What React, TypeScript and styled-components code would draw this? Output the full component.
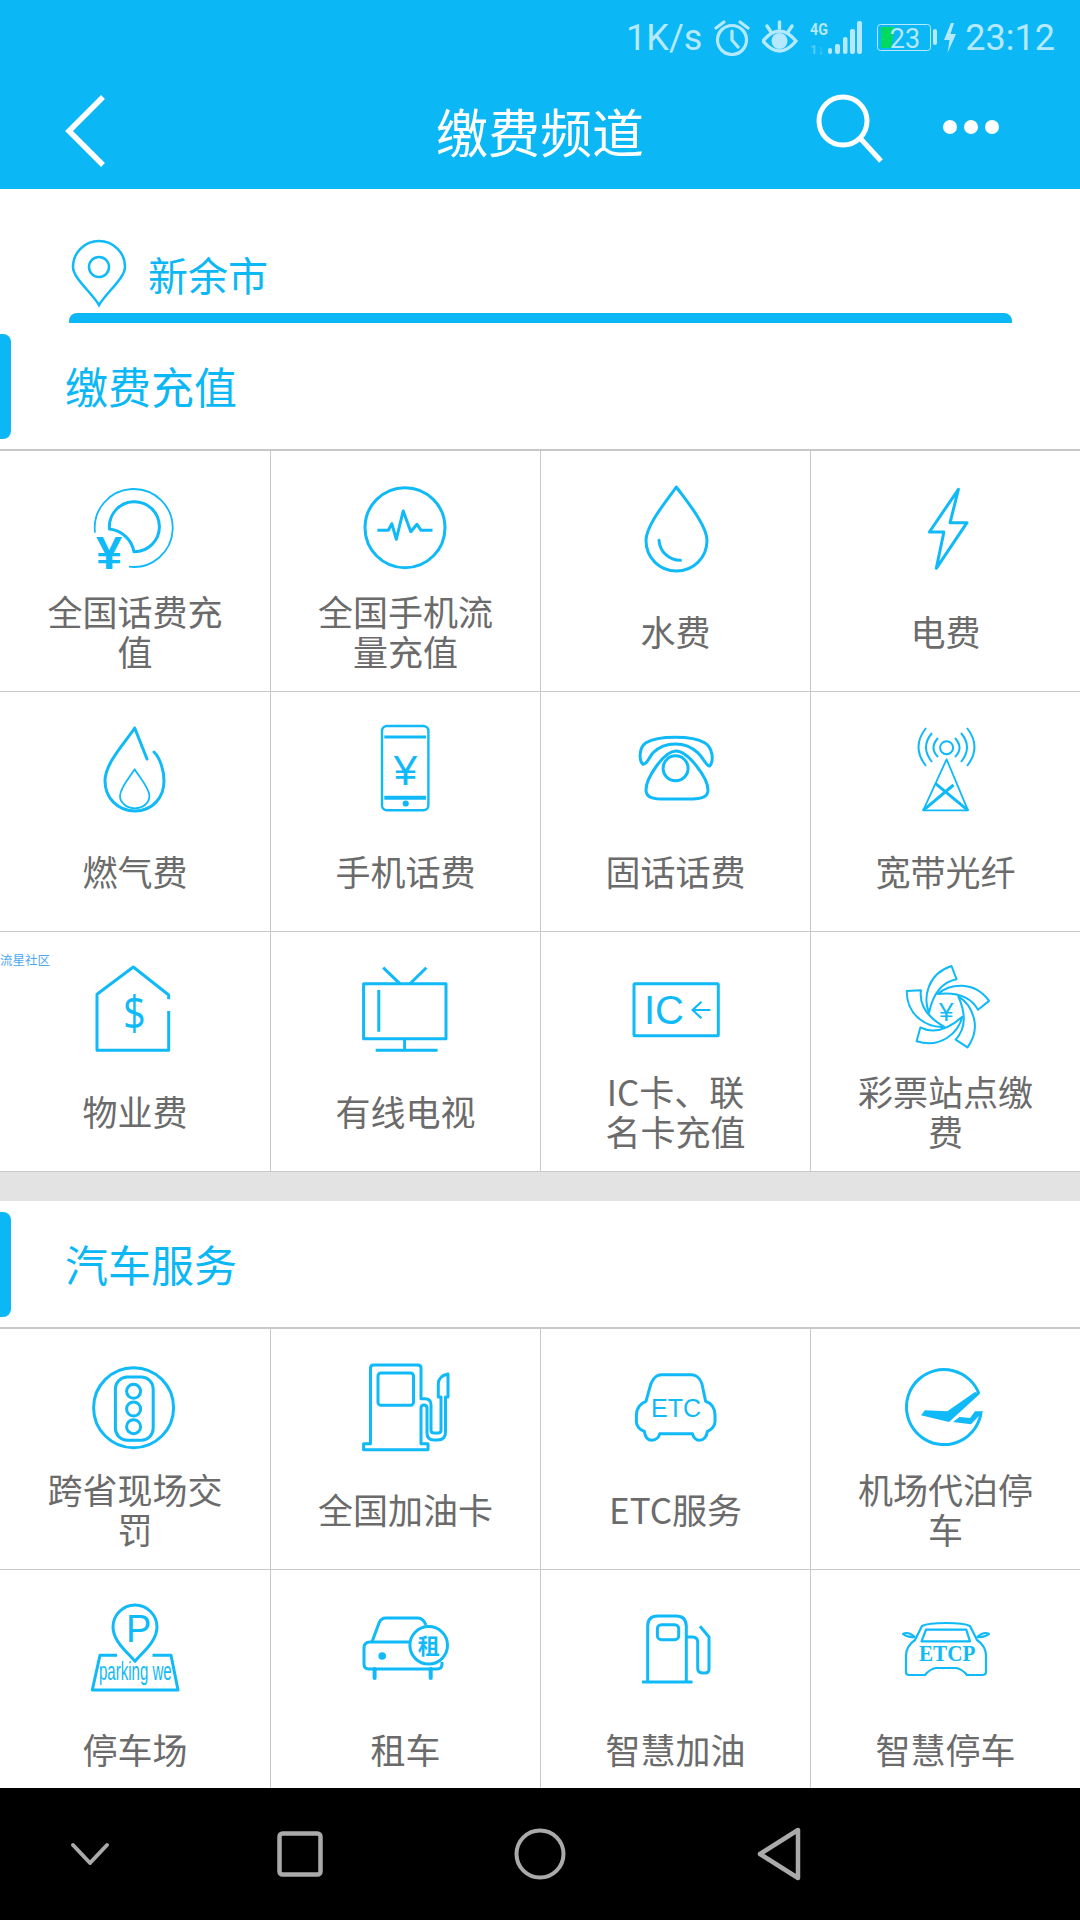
import React from 'react';
import styled, { createGlobalStyle } from 'styled-components';

const BLUE = '#0bb7f5';
const ICON = '#10b9f7';
const CJK = '"Noto Sans CJK SC", "Noto Sans", sans-serif';

const GlobalStyle = createGlobalStyle`
    html, body {
        margin: 0;
        padding: 0;
        background: #fff;
        font-family: ${CJK};
    }
    * {
        box-sizing: border-box;
    }
`;

const Page = styled.div`
    width: 1080px;
    height: 1920px;
    display: flex;
    flex-direction: column;
    overflow: hidden;
    background: #fff;
`;

const Header = styled.header`
    height: 189px;
    flex: none;
    background: ${BLUE};
    color: #fff;
`;

const StatusBar = styled.div`
    height: 72px;
    display: flex;
    align-items: center;
    justify-content: flex-end;
    gap: 12px;
    padding: 4px 25px 0 0;
    color: #b4e9ff;
    font-family: Roboto, sans-serif;
    font-size: 36px;
`;

const Clock = styled.span`
    margin-left: -3px;
`;

const TitleRow = styled.div`
    height: 117px;
    display: grid;
    grid-template-columns: 1fr auto 1fr;
    align-items: center;
`;

const BackSlot = styled.div`
    display: flex;
    padding-left: 59px;
`;

const Title = styled.h1`
    margin: 0;
    font-size: 52px;
    font-weight: 400;
    line-height: 70px;
`;

const Actions = styled.div`
    display: flex;
    align-items: center;
    justify-content: flex-end;
    gap: 58px;
    padding-right: 80px;
    margin-top: -3px;
`;

const Content = styled.main`
    flex: 1;
    min-height: 0;
    overflow: hidden;
`;

const LocationRow = styled.div`
    height: 124px;
    display: flex;
    align-items: flex-end;
    gap: 20px;
    padding: 0 0 5px 70px;
`;

const LocationName = styled.span`
    color: ${BLUE};
    font-size: 40px;
    line-height: 58px;
    margin-bottom: 5px;
`;

const LocationBar = styled.div`
    height: 10px;
    margin: 0 68px 0 69px;
    background: ${BLUE};
    border-radius: 8px 8px 0 0;
`;

const SectionHead = styled.div`
    height: 128px;
    display: flex;
    align-items: center;
    gap: 54px;
    border-bottom: 2px solid #c8c8c8;
`;

const SectionTitle = styled.h2`
    margin: 0 0 3px;
    color: ${BLUE};
    font-size: 43px;
    font-weight: 400;
`;

const Accent = styled.span`
    width: 11px;
    height: 105px;
    background: ${BLUE};
    border-radius: 0 8px 8px 0;
`;

const Grid = styled.div`
    display: grid;
    grid-template-columns: repeat(4, 270px);
`;

const Cell = styled.div`
    position: relative;
    height: 240px;
    padding-top: 26px;
    display: flex;
    flex-direction: column;
    align-items: center;
    border-bottom: 1px solid #c8c8c8;
    &:not(:nth-child(4n + 1)) {
        border-left: 1px solid #c8c8c8;
    }
    &:nth-child(-n + 4) {
        height: 241px;
        padding-top: 27px;
    }
`;

const Label = styled.div`
    width: 180px;
    height: 100px;
    margin-top: 3px;
    display: flex;
    align-items: center;
    justify-content: center;
    text-align: center;
    white-space: pre-line;
    color: #6b6b6b;
    font-size: 35px;
    line-height: 40px;
`;

const Watermark = styled.span`
    position: absolute;
    left: 0;
    top: 20px;
    color: #4aa8f2;
    font-size: 12.5px;
    line-height: 16px;
`;

const Divider = styled.div`
    height: 29px;
    background: #e3e3e3;
`;

const NavBar = styled.nav`
    height: 132px;
    flex: none;
    display: grid;
    grid-template-columns: 180px 240px 240px 240px;
    align-items: center;
    justify-items: center;
    background: #000;
`;

const IconSvg = styled.svg`
    width: 100px;
    height: 100px;
    flex: none;
    fill: none;
    stroke: ${ICON};
    stroke-width: 3;
    stroke-linejoin: round;
    text {
        fill: ${ICON};
        stroke: none;
    }
`;

const Icon = ({ children }: { children: React.ReactNode }) => (
    <IconSvg viewBox="0 0 100 100">{children}</IconSvg>
);

const CJK_ICON = '"Noto Sans CJK SC", sans-serif';
const SANS = '"Liberation Sans", sans-serif';

const blade = 'M55.5 8 L60.6 21.3 C46 24 37 36 33 54.7 C27 40 31 16 55.5 8Z';

const icons = {
    phoneBill: (
        <Icon>
            <path strokeWidth="1.8" d="M10 54.7 A39 39 0 1 1 44 88.7" />
            <path d="M24.5 51 A25 25 0 1 1 49 73.7 A28 28 0 0 0 24.5 51Z" />
            <text x="24" y="91" fontFamily={SANS} fontSize="47" fontWeight="700" textAnchor="middle">¥</text>
        </Icon>
    ),
    traffic: (
        <Icon>
            <circle cx="49" cy="49.7" r="40" />
            <path d="M21.4 52.3 H32.4 L35.8 45.7 L40.3 61.3 L47.2 33 L54.8 53.7 L61 46.3 L65.1 52.3 H76.5" />
        </Icon>
    ),
    water: (
        <Icon>
            <path d="M50.3 9 C42 21 20 47 20 62.5 C20 80 34 93 50.3 93 C67 93 81 80 81 62.5 C81 47 59 21 50.3 9Z" />
            <path strokeLinecap="round" d="M33 62.3 C34 74 43 82.3 54.5 82.3" />
        </Icon>
    ),
    power: (
        <Icon>
            <path d="M62.4 11.3 L33.4 54 H47.9 L40.3 90.3 L71 44.7 H54.1Z" />
        </Icon>
    ),
    gas: (
        <Icon>
            <path strokeLinecap="round" d="M62 41 L49.7 10 C40 25 20 45 20 63 C20 80 33 93 50 93 C67 93 79 80 79 63 C79 52 75 40 69 34" />
            <path strokeWidth="1.8" d="M49.7 51.3 C44 60 35 70 35 78 C35 85 42 90.3 49.7 90.3 C58 90.3 64.4 85 64.4 78 C64.4 70 55 60 49.7 51.3Z" />
        </Icon>
    ),
    mobile: (
        <Icon>
            <rect x="26" y="8" width="46.4" height="84.3" rx="5" strokeWidth="2.4" />
            <path d="M28.3 19 H70" />
            <path strokeWidth="4" d="M28.3 79.7 H70" />
            <circle cx="49.7" cy="85.5" r="1.6" />
            <text x="49.5" y="66.5" fontFamily={SANS} fontSize="42" textAnchor="middle">¥</text>
        </Icon>
    ),
    landline: (
        <Icon>
            <path d="M17 46.3 C13 43 12.5 29.7 20 24.7 C32 17.3 66.5 17.3 78.6 24.7 C87 29.7 88 43 83.7 48 C80 48 78.6 41.3 71.7 34.7 C59.6 23 39 23 27 34.7 C21.8 41.3 21 46.3 17 46.3Z" />
            <path d="M50 33 C38 33 20 60 20 72 C20 80 28 81 35 81 H66 C74 81 82 80 82 72 C82 60 62 33 50 33Z" />
            <circle cx="49.6" cy="50.3" r="12.5" />
        </Icon>
    ),
    broadband: (
        <Icon>
            <circle cx="50.6" cy="29.7" r="6.5" strokeWidth="2" />
            <path strokeWidth="2" d="M42 20 Q33 30 42 39 M59 20 Q68 30 59 39 M36 15 Q24 29 36 44 M65 15 Q77 29 65 44 M30 10 Q15 29 30 48 M71 10 Q86 29 71 48" />
            <path strokeWidth="1.8" d="M50.6 41.3 L27.2 92.3 H72 Z" />
            <path d="M39.3 65.3 L72 92.3 M57.5 67 L27.2 92.3" />
        </Icon>
    ),
    property: (
        <Icon>
            <path d="M83.7 41.3 V37 L48.3 9 L12 36.3 V92.3 H83.7 V53" />
            <text transform="translate(38 72) scale(0.85 1)" fontFamily='"Open Sans", sans-serif' fontSize="47">$</text>
        </Icon>
    ),
    tv: (
        <Icon>
            <rect x="7.6" y="25.7" width="82.4" height="55" />
            <path d="M27.2 9.7 L43.8 25.7 M70.3 9.7 L54 25.7 M22.8 32 V73.7 M48.6 80.7 V92.3 M19.7 92.3 H81.6" />
        </Icon>
    ),
    icCard: (
        <Icon>
            <rect x="8" y="25.7" width="84.3" height="52" rx="1" />
            <text x="18" y="66.3" fontFamily={SANS} fontSize="40">IC</text>
            <path strokeWidth="2.2" d="M84.4 52 H66.5 M75.5 43.7 L66.5 52 L75.5 60.3" />
        </Icon>
    ),
    lottery: (
        <Icon>
            {[0, 72, 144, 216, 288].map((deg) => (
                <path key={deg} strokeWidth="2" d={blade} transform={`rotate(${deg} 50.3 51.3)`} />
            ))}
            <text x="50.3" y="63" fontFamily={SANS} fontSize="26" textAnchor="middle">¥</text>
        </Icon>
    ),
    fines: (
        <Icon>
            <circle cx="48.6" cy="51.7" r="40" />
            <rect x="30.4" y="21" width="37.8" height="63.3" rx="12" />
            <circle cx="48.6" cy="35.3" r="7" />
            <circle cx="48.6" cy="53" r="7" />
            <circle cx="48.6" cy="70.7" r="7" />
        </Icon>
    ),
    fuelCard: (
        <Icon>
            <path d="M14.5 87.7 V12 q0-3 3-3 H62 q3 0 3 3 V42.7 H69 q6 0 6 6 V74 q0 3 3 3 h4 q3 0 3-3 V41 H82.3 V28 q0-8 9.7-10 V41 H89.5 V76 q0 8-8 8 H78 q-7 0-7-7 V52 q0-3-3-3 q-3 0-3 3 V87.7 H72 V93.7 H7.6 V87.7Z" />
            <rect x="22" y="17" width="35.5" height="32.3" rx="3" />
        </Icon>
    ),
    etc: (
        <Icon>
            <path d="M35.5 18.7 H65 C72 18.7 76 25 77 32.7 L79.6 45.3 C85 47 89 52 89 59.3 V66 C89 70 85 74 81.3 75.3 C81 81 77 84.3 73.4 84.3 C70 84.3 67 81 66.5 77.7 H33.8 C33 81 30 84.3 26 84.3 C22 84.3 19 81 18.3 75.3 C14 74 10.4 70 10.4 66 V59.3 C10.4 52 15 47 20 45.3 L23.5 32.7 C25 25 29 18.7 35.5 18.7Z" />
            <text x="50" y="61" fontFamily={SANS} fontSize="25" textAnchor="middle">ETC</text>
        </Icon>
    ),
    airport: (
        <Icon>
            <path d="M83 37.7 A37.5 37.5 0 1 0 85 57" />
            <path fill={ICON} stroke="none" d="M84 37.7 L79 36 L51.3 55.3 L29 54.3 L25 59.3 L53 66Z" />
            <path fill={ICON} stroke="none" d="M87.5 55.3 H79 L74 62 L63.5 61 L57 66 L75 68.3Z" />
        </Icon>
    ),
    parking: (
        <Icon>
            <path d="M50 65.3 C42 56 28 45 28 31 a22 22 0 0 1 44 0 C72 45 58 56 50 65.3Z" />
            <text x="41" y="46" fontFamily={SANS} fontSize="38">P</text>
            <path d="M32 59.3 H15 L7.3 94 H93 L86 59.3 H67.5" />
            <text transform="translate(14 84) scale(0.94 1.65)" fontFamily={SANS} fontSize="16">parking we</text>
        </Icon>
    ),
    rental: (
        <Icon>
            <path d="M16 46 L23 27 q2-5 7-5 H62 q5 0 8 7" />
            <path d="M54 46 H14 q-6 0-6 6 V68 q0 5 5 5 H81 q5 0 5-5 V66" />
            <circle cx="72.7" cy="49.3" r="18.8" />
            <circle cx="26.2" cy="60" r="3.8" fill={ICON} stroke="none" />
            <path strokeWidth="4" strokeLinecap="round" d="M18.6 73 V82 M74.7 73 V82" />
            <text x="72.7" y="57.5" fontFamily={CJK_ICON} fontSize="22" fontWeight="700" textAnchor="middle">租</text>
        </Icon>
    ),
    smartFuel: (
        <Icon>
            <path d="M21.7 86 V30 q0-10 10-10 H50 q10 0 10.3 10 V86 M16 86 H66.5" />
            <rect x="31.4" y="28.7" width="21.3" height="15" rx="4" />
            <path d="M60.3 41 H66.5 q5.2 0 5.2 5 V72 q0 5 5 5 H79 q4 0 4-4 V41 L74 30.3" />
        </Icon>
    ),
    etcp: (
        <Icon>
            <path strokeWidth="2.2" d="M26 30 Q32 27 50 27 Q68 27 74 30 L81 44 Q90 50 90 60 V76 Q90 79 86 79 H71 Q66 73 60 72 H40 Q34 73 29 79 H13 Q10 79 10 76 V60 Q10 50 19 44Z" />
            <path strokeWidth="2.2" d="M30 33.7 H70.3 L74 45.3 H25.5Z" />
            <path strokeWidth="2.2" d="M19 41 Q12 35 7 38 Q12 42 19 41 M81 41 Q88 35 93 38 Q88 42 81 41" />
            <text transform="translate(23 65) scale(0.88 1)" fontFamily='"Liberation Serif", serif' fontSize="24" fontWeight="700">ETCP</text>
        </Icon>
    ),
};

type Item = { label: string; icon: React.ReactNode; mark?: string };

const billItems: Item[] = [
    { label: '全国话费充值', icon: icons.phoneBill },
    { label: '全国手机流量充值', icon: icons.traffic },
    { label: '水费', icon: icons.water },
    { label: '电费', icon: icons.power },
    { label: '燃气费', icon: icons.gas },
    { label: '手机话费', icon: icons.mobile },
    { label: '固话话费', icon: icons.landline },
    { label: '宽带光纤', icon: icons.broadband },
    { label: '物业费', icon: icons.property, mark: '流星社区' },
    { label: '有线电视', icon: icons.tv },
    { label: 'IC卡、联\n名卡充值', icon: icons.icCard },
    { label: '彩票站点缴费', icon: icons.lottery },
];

const carItems: Item[] = [
    { label: '跨省现场交罚', icon: icons.fines },
    { label: '全国加油卡', icon: icons.fuelCard },
    { label: 'ETC服务', icon: icons.etc },
    { label: '机场代泊停车', icon: icons.airport },
    { label: '停车场', icon: icons.parking },
    { label: '租车', icon: icons.rental },
    { label: '智慧加油', icon: icons.smartFuel },
    { label: '智慧停车', icon: icons.etcp },
];

const Section = ({ title, items }: { title: string; items: Item[] }) => (
    <section>
        <SectionHead>
            <Accent />
            <SectionTitle>{title}</SectionTitle>
        </SectionHead>
        <Grid>
            {items.map((item) => (
                <Cell key={item.label}>
                    {item.mark && <Watermark>{item.mark}</Watermark>}
                    {item.icon}
                    <Label>{item.label}</Label>
                </Cell>
            ))}
        </Grid>
    </section>
);

const STATUS = '#b4e9ff';

const StatusIcons = () => (
    <>
        <svg width="36" height="36" viewBox="0 0 36 36" fill="none" stroke={STATUS} strokeWidth="3.2" strokeLinecap="round">
            <circle cx="18" cy="20" r="14.5" />
            <path d="M18 11 V20 L24 27 M2 8 L10 2 M34 8 L26 2" />
        </svg>
        <svg width="36" height="36" viewBox="0 0 36 36" fill="none" stroke={STATUS} strokeWidth="3.4" strokeLinecap="round">
            <path d="M1 21 Q17.5 1 34 21 Q17.5 41 1 21Z" />
            <circle cx="17.5" cy="21" r="8" fill={STATUS} stroke="none" />
            <path d="M17.5 2 V8 M5 6 L9 12 M30 6 L26 12" />
        </svg>
        <svg width="52" height="36" viewBox="0 0 52 36" fill={STATUS}>
            <text transform="translate(0 15) scale(0.95 1.15)" fontFamily="Roboto, sans-serif" fontSize="15" fontWeight="700">4G</text>
            <text x="0" y="34" fontFamily="Roboto, sans-serif" fontSize="13" fontWeight="700" opacity="0.45">1↓</text>
            <rect x="18" y="28" width="4" height="6" rx="2" />
            <rect x="25" y="24" width="5" height="10" rx="2" />
            <rect x="33" y="17" width="4.5" height="17" rx="2" />
            <rect x="40" y="9" width="5" height="25" rx="2" />
            <rect x="47" y="1" width="5" height="33" rx="2" />
        </svg>
        <svg width="82" height="36" viewBox="0 0 82 36" fill="none">
            <rect x="3.5" y="4.5" width="53" height="26" rx="3" stroke={STATUS} />
            <path d="M7 7 H21 L17 28 H7Z" fill="#00d95f" />
            <text x="31" y="27.5" fill={STATUS} fontFamily="Roboto, sans-serif" fontSize="27" textAnchor="middle">23</text>
            <rect x="59" y="9" width="4" height="16" rx="2" fill={STATUS} />
            <path d="M77 3 L70 20 H75.5 L73.5 33 L82 14 H76.5 L80 3Z" fill={STATUS} />
        </svg>
    </>
);

export default function App() {
    return (
        <Page>
            <GlobalStyle />
            <Header>
                <StatusBar>
                    <span>1K/s</span>
                    <StatusIcons />
                    <Clock>23:12</Clock>
                </StatusBar>
                <TitleRow>
                    <BackSlot>
                        <svg width="50" height="76" viewBox="0 0 50 76" fill="none" stroke="#fff" strokeWidth="5.5">
                            <path d="M44 4 L10 38 L44 72" />
                        </svg>
                    </BackSlot>
                    <Title>缴费频道</Title>
                    <Actions>
                        <svg width="68" height="70" viewBox="0 0 68 70" fill="none" stroke="#fff" strokeWidth="5">
                            <circle cx="27" cy="27" r="24" />
                            <path d="M44 44 L65 67" />
                        </svg>
                        <svg width="58" height="70" viewBox="0 0 58 70" fill="#fff">
                            <circle cx="8" cy="33" r="7" />
                            <circle cx="29" cy="33" r="7" />
                            <circle cx="50" cy="33" r="7" />
                        </svg>
                    </Actions>
                </TitleRow>
            </Header>
            <Content>
                <LocationRow>
                    <svg width="58" height="70" viewBox="0 0 58 70" fill="none" stroke={ICON} strokeWidth="2.5">
                        <path d="M29 67 C22 55 3 40 3 29 a26 26 0 0 1 52 0 C55 40 36 55 29 67Z" />
                        <circle cx="29" cy="29" r="10" />
                    </svg>
                    <LocationName>新余市</LocationName>
                </LocationRow>
                <LocationBar />
                <Section title="缴费充值" items={billItems} />
                <Divider />
                <Section title="汽车服务" items={carItems} />
            </Content>
            <NavBar>
                <svg width="40" height="24" viewBox="0 0 40 24" fill="none" stroke="#aaa" strokeWidth="4" strokeLinecap="round" strokeLinejoin="round">
                    <path d="M3 3 L20 21 L37 3" />
                </svg>
                <svg width="46" height="46" viewBox="0 0 46 46" fill="none" stroke="#aaa" strokeWidth="4.5">
                    <rect x="2.5" y="2.5" width="41" height="41" rx="3" />
                </svg>
                <svg width="52" height="52" viewBox="0 0 52 52" fill="none" stroke="#aaa" strokeWidth="4">
                    <circle cx="26" cy="26" r="23.5" />
                </svg>
                <svg width="46" height="54" viewBox="0 0 46 54" fill="none" stroke="#aaa" strokeWidth="4.5" strokeLinejoin="round">
                    <path d="M41 3 V51 L3 27Z" />
                </svg>
            </NavBar>
        </Page>
    );
}
